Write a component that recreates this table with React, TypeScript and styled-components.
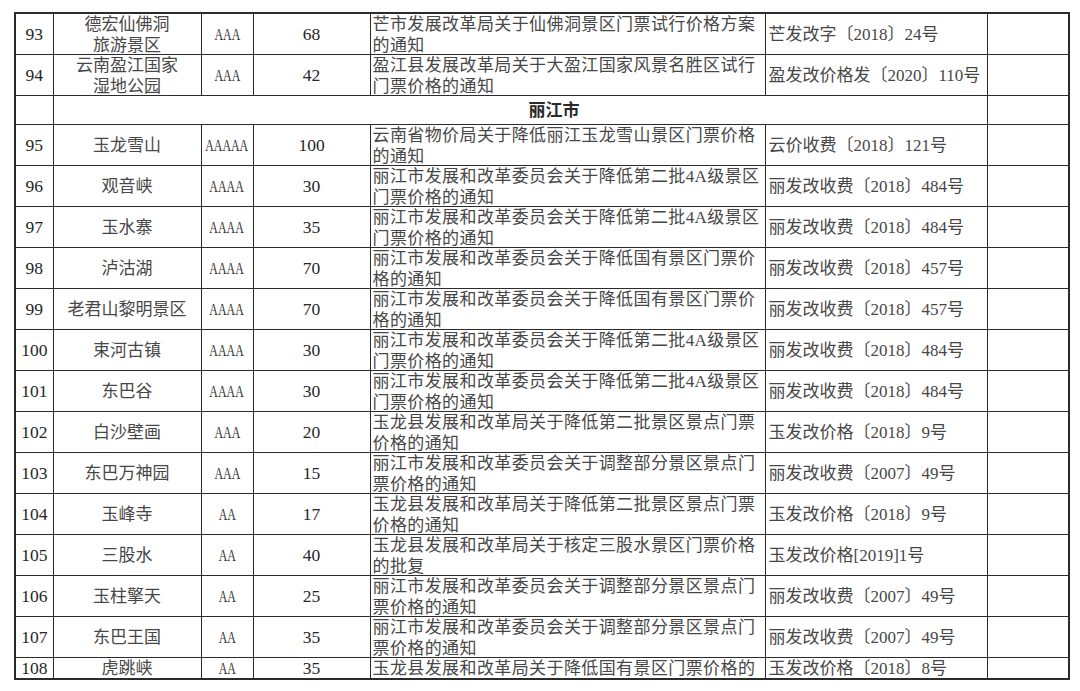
import React from 'react';
import styled, {createGlobalStyle} from 'styled-components';

const GlobalStyle = createGlobalStyle`
  html, body {
    margin: 0;
    padding: 0;
    background: #ffffff;
  }
  body {
    font-family: "Liberation Serif", "Noto Sans CJK SC", serif;
    color: #333;
  }
`

const Page = styled.div`
  padding: 12px 0 0 14px;
  height: 691px;
  box-sizing: border-box;
  overflow: hidden;
`

const Table = styled.table`
  border-collapse: collapse;
  table-layout: fixed;
  width: 1054px;
  border: 2px solid #2b2b2b;
`

const Cell = styled.td`
  border: 1px solid #2b2b2b;
  padding: 0;
  vertical-align: top;
`

const Inner = styled.div<{ $align?: 'left' | 'center'; $h: number; $multi?: boolean; $pad?: number }>`
  height: ${(p) => p.$h}px;
  overflow: hidden;
  display: flex;
  flex-direction: column;
  justify-content: ${(p) => (p.$multi ? 'flex-start' : 'center')};
  align-items: ${(p) => (p.$align === 'left' ? 'flex-start' : 'center')};
  padding-left: ${(p) => p.$pad ?? 0}px;
  font-size: 17px;
  line-height: 21px;
  white-space: nowrap;
  color: #474747;
`

const Notice = styled.span`
  letter-spacing: 0.4px;
`

const Num = styled.span`
  font-size: 17.5px;
  color: #262626;
`

const Level = styled.span`
  display: inline-block;
  transform: scaleX(0.7);
  font-size: 17px;
  color: #383838;
`

const Region = styled.span`
  font-weight: 600;
  color: #2a2a2a;
  padding-left: 68px;
`

type Row = {
    no: string;
    name: string[];
    level: string;
    price: string;
    notice: string[];
    doc: string;
};

const before: Row[] = [
    {no: '93', name: ['德宏仙佛洞', '旅游景区'], level: 'AAA', price: '68', notice: ['芒市发展改革局关于仙佛洞景区门票试行价格方案', '的通知'], doc: '芒发改字〔2018〕24号'},
    {no: '94', name: ['云南盈江国家', '湿地公园'], level: 'AAA', price: '42', notice: ['盈江县发展改革局关于大盈江国家风景名胜区试行', '门票价格的通知'], doc: '盈发改价格发〔2020〕110号'},
];

const lowerPrice4A = ['丽江市发展和改革委员会关于降低第二批4A级景区', '门票价格的通知'];
const lowerState = ['丽江市发展和改革委员会关于降低国有景区门票价', '格的通知'];
const yulongSecond = ['玉龙县发展和改革局关于降低第二批景区景点门票', '价格的通知'];
const adjustPart = ['丽江市发展和改革委员会关于调整部分景区景点门', '票价格的通知'];

const lijiang: Row[] = [
    {no: '95', name: ['玉龙雪山'], level: 'AAAAA', price: '100', notice: ['云南省物价局关于降低丽江玉龙雪山景区门票价格', '的通知'], doc: '云价收费〔2018〕121号'},
    {no: '96', name: ['观音峡'], level: 'AAAA', price: '30', notice: lowerPrice4A, doc: '丽发改收费〔2018〕484号'},
    {no: '97', name: ['玉水寨'], level: 'AAAA', price: '35', notice: lowerPrice4A, doc: '丽发改收费〔2018〕484号'},
    {no: '98', name: ['泸沽湖'], level: 'AAAA', price: '70', notice: lowerState, doc: '丽发改收费〔2018〕457号'},
    {no: '99', name: ['老君山黎明景区'], level: 'AAAA', price: '70', notice: lowerState, doc: '丽发改收费〔2018〕457号'},
    {no: '100', name: ['束河古镇'], level: 'AAAA', price: '30', notice: lowerPrice4A, doc: '丽发改收费〔2018〕484号'},
    {no: '101', name: ['东巴谷'], level: 'AAAA', price: '30', notice: lowerPrice4A, doc: '丽发改收费〔2018〕484号'},
    {no: '102', name: ['白沙壁画'], level: 'AAA', price: '20', notice: yulongSecond, doc: '玉发改价格〔2018〕9号'},
    {no: '103', name: ['东巴万神园'], level: 'AAA', price: '15', notice: adjustPart, doc: '丽发改收费〔2007〕49号'},
    {no: '104', name: ['玉峰寺'], level: 'AA', price: '17', notice: yulongSecond, doc: '玉发改价格〔2018〕9号'},
    {no: '105', name: ['三股水'], level: 'AA', price: '40', notice: ['玉龙县发展和改革局关于核定三股水景区门票价格', '的批复'], doc: '玉发改价格[2019]1号'},
    {no: '106', name: ['玉柱擎天'], level: 'AA', price: '25', notice: adjustPart, doc: '丽发改收费〔2007〕49号'},
    {no: '107', name: ['东巴王国'], level: 'AA', price: '35', notice: adjustPart, doc: '丽发改收费〔2007〕49号'},
    {no: '108', name: ['虎跳峡'], level: 'AA', price: '35', notice: ['玉龙县发展和改革局关于降低国有景区门票价格的'], doc: '玉发改价格〔2018〕8号'},
];

const widths = [38, 148, 52, 117, 395, 222, 82];

const DataRow = ({row, h}: { row: Row; h: number }) => (
    <tr>
        <Cell><Inner $h={h}><Num>{row.no}</Num></Inner></Cell>
        <Cell>
            <Inner $h={h} $multi={row.name.length > 1}>
                {row.name.map((n) => <span key={n}>{n}</span>)}
            </Inner>
        </Cell>
        <Cell><Inner $h={h}><Level>{row.level}</Level></Inner></Cell>
        <Cell><Inner $h={h}><Num>{row.price}</Num></Inner></Cell>
        <Cell>
            <Inner $h={h} $align="left" $multi $pad={2}>
                {row.notice.map((n) => <Notice key={n}>{n}</Notice>)}
            </Inner>
        </Cell>
        <Cell><Inner $h={h} $align="left" $pad={3}>{row.doc}</Inner></Cell>
        <Cell><Inner $h={h}/></Cell>
    </tr>
);

const App = () => {
    return (
        <Page>
            <GlobalStyle/>
            <Table>
                <colgroup>
                    {widths.map((w, i) => <col key={i} style={{width: w}}/>)}
                </colgroup>
                <tbody>
                {before.map((r) => <DataRow key={r.no} row={r} h={40}/>)}
                <tr>
                    <Cell><Inner $h={28}/></Cell>
                    <Cell colSpan={5}><Inner $h={28}><Region>丽江市</Region></Inner></Cell>
                    <Cell><Inner $h={28}/></Cell>
                </tr>
                {lijiang.map((r, i) => (
                    <DataRow key={r.no} row={r} h={i === lijiang.length - 1 ? 20 : 40}/>
                ))}
                </tbody>
            </Table>
        </Page>
    );
}

export default App;
